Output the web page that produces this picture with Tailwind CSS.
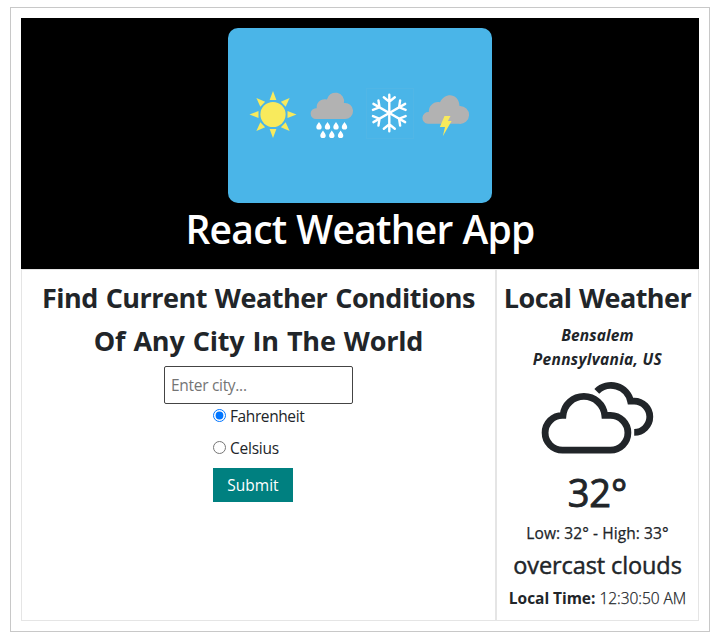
<!DOCTYPE html>
<html lang="en">
<head>
<meta charset="utf-8">
<title>React Weather App</title>
<script src="https://cdn.jsdelivr.net/npm/@tailwindcss/browser@4"></script>
</head>
<body class="bg-white text-[#212529] font-['Open_Sans','Noto_Sans',sans-serif] text-[15.5px] leading-6">
<div class="pl-[10px] pt-[7px]">
<div class="w-[700px] h-[625px] border border-[#c8c8c8] p-[10px]">
  <header class="w-[678px] h-[251px] bg-black pt-[10px] flex flex-col items-center">
    <svg class="w-[264px] h-[175px] shrink-0 rounded-[10px] bg-[#4ab5e8]" viewBox="228 28 264 175">
      <g fill="#f8ea5c">
        <circle cx="273" cy="114.5" r="12.6"/>
        <path d="M273 91l3.4 9h-6.8z"/>
        <path d="M273 91l3.4 9h-6.8z" transform="rotate(45 273 114.5)"/>
        <path d="M273 91l3.4 9h-6.8z" transform="rotate(90 273 114.5)"/>
        <path d="M273 91l3.4 9h-6.8z" transform="rotate(135 273 114.5)"/>
        <path d="M273 91l3.4 9h-6.8z" transform="rotate(180 273 114.5)"/>
        <path d="M273 91l3.4 9h-6.8z" transform="rotate(225 273 114.5)"/>
        <path d="M273 91l3.4 9h-6.8z" transform="rotate(270 273 114.5)"/>
        <path d="M273 91l3.4 9h-6.8z" transform="rotate(315 273 114.5)"/>
      </g>
      <path fill="#b2b2b2" d="M316 119a5.4 5.4 0 0 1 0-10.8h.7c-.4-6 4.500-10 10.200-8.600a8.600 8.600 0 0 1 17 3.500a8 8 0 1 1 .8 15.900z"/>
      <g fill="#fff">
        <path id="drop" d="M319 122c1 2 2.700 3.200 2.700 4.900a2.700 2.700 0 0 1-5.400 0c0-1.700 1.700-2.900 2.700-4.900z"/>
        <use href="#drop" x="8.500"/><use href="#drop" x="17"/><use href="#drop" x="25.500"/>
        <use href="#drop" x="4" y="8.500"/><use href="#drop" x="12.800" y="8.500"/><use href="#drop" x="21.600" y="8.500"/>
      </g>
      <rect x="366.500" y="88.500" width="47" height="50" fill="none" stroke="#51b6e6" stroke-width="1"/>
      <g fill="none" stroke="#fff" stroke-width="2.400" stroke-linecap="round">
        <path id="arm" d="M389.300 113V94.700M383.800 97.300l5.500 4.400l5.500-4.400"/>
        <use href="#arm" transform="rotate(60 389.300 113)"/>
        <use href="#arm" transform="rotate(120 389.300 113)"/>
        <use href="#arm" transform="rotate(180 389.300 113)"/>
        <use href="#arm" transform="rotate(240 389.300 113)"/>
        <use href="#arm" transform="rotate(300 389.300 113)"/>
      </g>
      <path fill="#b2b2b2" d="M427.800 123.800a5.800 5.800 0 0 1 1-11.700c-.2-6.500 5.200-11.200 11.200-9.800c5-10.500 19-9 19.500 3.600a9 9 0 1 1 -.6 17.900z"/>
      <path fill="#f8ea5c" d="M444.500 116h6l-2.600 5h3.700l-8.800 15.200l2.200-9.200h-5.200z"/>
    </svg>
    <h1 class="text-[39px] leading-[48px] mt-[2px] font-semibold tracking-[-0.75px] [word-spacing:0.5px] text-white whitespace-nowrap">React Weather App</h1>
  </header>
  <main class="flex w-[678px] h-[352px]">
    <section class="w-[475px] border border-[#e5e5e5] flex flex-col items-center pt-[6px]">
      <h2 class="text-[27px] leading-[43px] font-bold text-center whitespace-nowrap"><span class="tracking-[-0.5px] [word-spacing:1.3px]">Find Current Weather Conditions</span><br><span class="tracking-[-0.2px] [word-spacing:1.3px]">Of Any City In The World</span></h2>
      <form class="w-[189px]">
        <input type="text" placeholder="Enter city..." class="block w-[189px] h-[38px] mt-[4px] border border-[#444] rounded-[2px] pl-[6px] tracking-[-0.3px] placeholder:text-[#757575]">
        <div class="pl-[49px]">
          <label class="flex items-center h-6 gap-1"><input type="radio" name="unit" checked class="size-[13px] mb-[2px] accent-[#0075ff]"><span class="tracking-[-0.4px]">Fahrenheit</span></label>
          <label class="flex items-center h-6 mt-2 gap-1"><input type="radio" name="unit" class="size-[13px] mb-[2px]"><span class="tracking-[-0.25px]">Celsius</span></label>
          <button type="button" class="block w-[80px] h-[34px] mt-2 bg-[#008080] text-white">Submit</button>
        </div>
      </form>
    </section>
    <section class="w-[203px] border border-[#e5e5e5] flex flex-col items-center pt-[6px] whitespace-nowrap">
      <h2 class="text-[27px] leading-[43px] font-bold tracking-[-0.55px] [word-spacing:1px]">Local Weather</h2>
      <p class="mt-[4px] font-bold italic text-center tracking-[0.15px]"><span>Bensalem</span><br><span class="tracking-[0.3px]">Pennsylvania, US</span></p>
      <svg class="w-[112px] h-[74px] mt-[9px] shrink-0 overflow-visible" viewBox="541.500 380.500 112 74" fill="none" stroke="#212529" stroke-width="6.800">
        <path d="M562 450.700a17.400 17.400 0 0 1 0-34.800l.5 0a21 21 0 0 1 41.800 0h5.700a17.400 17.400 0 0 1 0 34.800z"/>
        <path d="M596.300 391.800a20 20 0 0 1 33.800 9.900h3.600a15.600 15.600 0 0 1 0 31.200"/>
      </svg>
      <p class="text-[38px] leading-[48px] mt-[14px] font-normal [-webkit-text-stroke:0.9px_#212529]">32°</p>
      <p class="mt-[5px] tracking-[0.08px] [-webkit-text-stroke:0.25px_#212529]">Low: 32° - High: 33°</p>
      <p class="text-[23.5px] leading-[29px] mt-[6px] tracking-[-0.1px] [-webkit-text-stroke:0.45px_#212529]">overcast clouds</p>
      <p class="mt-[6px] tracking-[-0.04px]"><b>Local Time:</b> <span class="[-webkit-text-stroke:0.25px_#212529] font-light">12:30:50 AM</span></p>
    </section>
  </main>
</div>
</div>
</body>
</html>
